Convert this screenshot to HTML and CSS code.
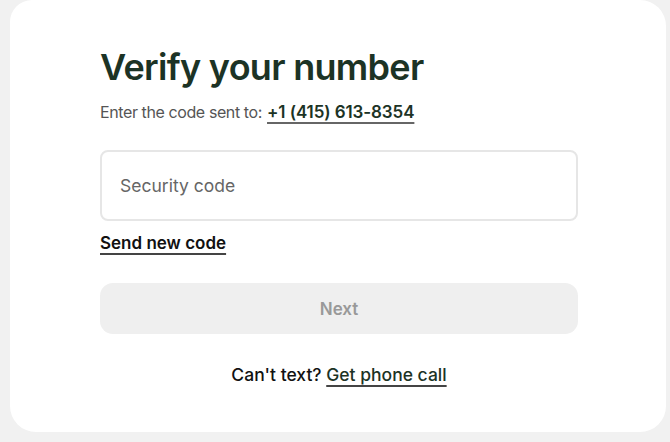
FILE: index.html
```html
<!DOCTYPE html>
<html lang="en">
<head>
    <meta charset="UTF-8">
    <meta name="viewport" content="width=device-width, initial-scale=1.0">
    <title>Verify your number</title>
    <link rel="stylesheet" href="styles.css">
</head>
<body>

    <div class="verify-card">
        <h1>Verify your number</h1>
        <p class="sent-to">Enter the code sent to: <a href="#" class="phone">+1 (415) 613-8354</a></p>

        <form id="verifyForm" class="verify-form">
            <input type="text" id="code" name="code" placeholder="Security code" inputmode="numeric">
            <a href="#" class="resend">Send new code</a>
            <button type="submit" class="next-btn" disabled>Next</button>
        </form>

        <p class="alt">Can't text? <a href="#">Get phone call</a></p>
    </div>

</body>
</html>
```

FILE: styles.css
```css
body {
    background-color: #f1f1f1;
    color: #111;
    font-family: Inter, "Noto Sans", sans-serif;
    margin: 0;
    padding: 0;
}

.verify-card {
    width: 656px;
    height: 432px;
    margin: 0 0 0 10px;
    box-sizing: border-box;
    padding: 45px 88px 0 90px;
    background-color: #fff;
    border-radius: 22px 26px 26px 26px;
}

h1 {
    margin: 0;
    font-size: 36px;
    font-weight: 600;
    letter-spacing: -0.7px;
    line-height: 44px;
    color: #1c3325;
}

.sent-to {
    margin: 13px 0 0;
    font-size: 16px;
    line-height: 21px;
    color: #555;
    letter-spacing: -0.4px;
}

.phone {
    margin-left: 1px;
    color: #1c3325;
    font-size: 17px;
    font-weight: 600;
    letter-spacing: -0.1px;
    text-decoration: underline;
    text-decoration-color: #666;
    text-underline-offset: 4px;
    text-decoration-thickness: 1.5px;
}

.verify-form {
    display: flex;
    flex-direction: column;
    align-items: flex-start;
    margin-top: 27px;
}

input[type="text"] {
    width: 100%;
    height: 71px;
    box-sizing: border-box;
    padding: 0 18px;
    border: 2px solid #e6e6e6;
    border-radius: 8px;
    font-family: inherit;
    font-size: 17.5px;
    color: #222;
    outline: none;
}

input::placeholder {
    color: #666;
}

.resend {
    margin-top: 11px;
    font-size: 17px;
    font-weight: 600;
    color: #111;
    text-decoration: underline;
    text-decoration-color: #444;
    text-underline-offset: 4px;
    text-decoration-thickness: 1.5px;
    line-height: 22px;
}

.next-btn {
    width: 100%;
    height: 51px;
    margin-top: 29px;
    border: none;
    border-radius: 13px;
    background-color: #efefef;
    color: #999;
    font-family: inherit;
    font-size: 17px;
    font-weight: 600;
}

.alt {
    margin: 29px 0 0;
    text-align: center;
    font-size: 17.5px;
    font-weight: 500;
    line-height: 24px;
    color: #111;
}

.alt a {
    color: #1c3325;
    text-decoration: underline;
    text-decoration-color: #444;
    text-underline-offset: 4px;
    text-decoration-thickness: 1.5px;
}
```
